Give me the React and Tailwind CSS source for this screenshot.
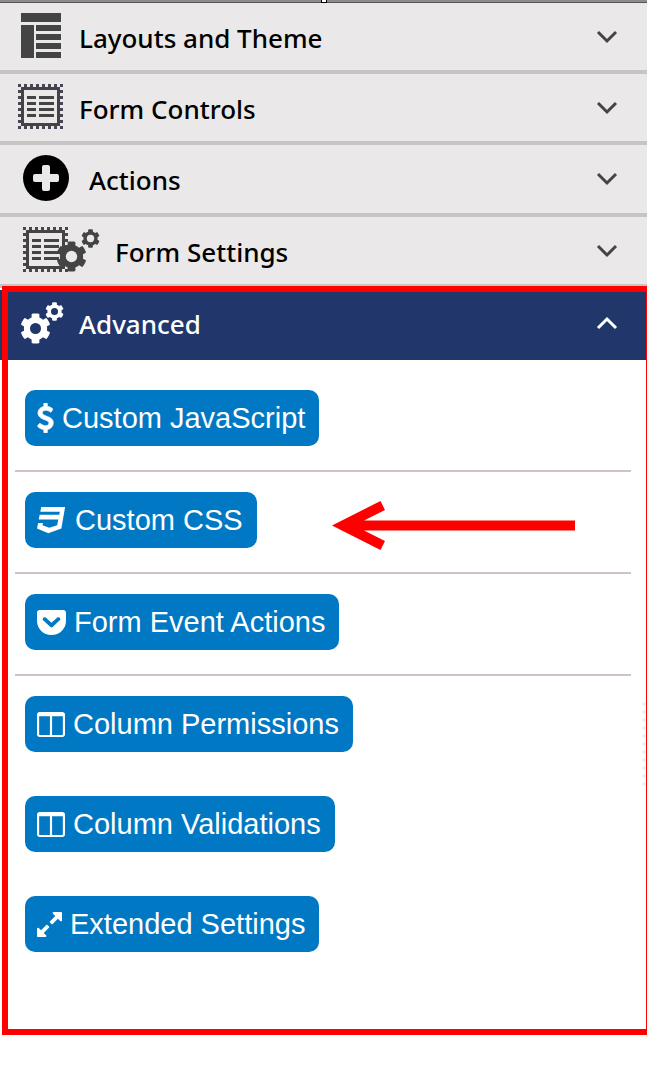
import { FaCog, FaCss3, FaGetPocket } from "react-icons/fa";

function LayoutIcon() {
  return (
    <svg className="ml-[21px] mr-[18px] h-[45px] w-10 shrink-0" viewBox="0 0 40 45" fill="#444444" shapeRendering="crispEdges">
      <path d="M0 0h40v9H0zM0 12h13v33H0zM15 12h25v6H15zM15 21h25v6H15zM15 30h25v6H15zM15 39h25v6H15z" />
    </svg>
  );
}

function FormShape() {
  return (
    <g shapeRendering="crispEdges">
      <path fill="none" stroke="#4b4455" strokeWidth="3" strokeDasharray="3 3" d="M0 1.5h45M0 43.5h45M1.5 0v45M43.5 0v45" />
      <path fill="none" stroke="#444444" strokeWidth="3" d="M4.5 4.5h36v36h-36z" />
      <path fill="#444444" d="M9 12h9v3H9zM21 12h15v3H21zM9 18h9v3H9zM21 18h15v3H21zM9 24h9v3H9zM21 24h15v3H21zM9 30h9v3H9zM21 30h15v3H21z" />
    </g>
  );
}

function FormIcon() {
  return (
    <svg className="ml-[18px] mr-4 h-[45px] w-[45px] shrink-0" viewBox="0 0 45 45">
      <FormShape />
    </svg>
  );
}

function PlusIcon() {
  return (
    <svg className="ml-[23px] mr-5 h-[46px] w-[46px] shrink-0" viewBox="0 0 46 46">
      <circle cx="23" cy="23" r="23" fill="#000" />
      <path fill="#eae8e8" d="M21 10h4a2 2 0 0 1 2 2v7h7a2 2 0 0 1 2 2v4a2 2 0 0 1-2 2h-7v7a2 2 0 0 1-2 2h-4a2 2 0 0 1-2-2v-7h-7a2 2 0 0 1-2-2v-4a2 2 0 0 1 2-2h7v-7a2 2 0 0 1 2-2z" />
    </svg>
  );
}

function FormSettingsIcon() {
  return (
    <svg className="ml-[23px] mr-[15px] h-[45px] w-[77px] shrink-0" viewBox="0 0 77 45">
      <FormShape />
      <FaCog x="33" y="14" size={31} color="#444444" />
      <FaCog x="58" y="2" size={19} color="#444444" />
      <circle cx="48.5" cy="29.5" r="5.700" fill="#eae8e8" />
      <circle cx="67.5" cy="11.5" r="3.700" fill="#eae8e8" />
    </svg>
  );
}

function CogsIcon() {
  return (
    <svg className="ml-5 mr-[15px] h-[42px] w-11 shrink-0" viewBox="0 0 44 42">
      <FaCog x="0" y="11" size={31} color="#fff" />
      <FaCog x="25" y="0" size={19} color="#fff" />
      <circle cx="15.5" cy="26.5" r="5.500" fill="#21376c" />
      <circle cx="34.5" cy="9.5" r="3.500" fill="#21376c" />
    </svg>
  );
}

function Chevron({ open }) {
  return (
    <svg className="mr-[29px] h-[14px] w-[22px] shrink-0" viewBox="0 0 22 14" fill="none" stroke="currentColor" strokeWidth="3">
      <path d={open ? "M2 12l9-9 9 9" : "M2 2l9 9 9-9"} />
    </svg>
  );
}

function DollarIcon() {
  return (
    <svg className="h-[30px] w-[17px]" viewBox="400 0 1000 1792" fill="currentColor" stroke="currentColor" strokeWidth="50">
      <path d="M1362 1185q0 153-99.5 263.5t-258.5 136.5v175q0 14-9 23t-23 9h-135q-13 0-22.5-9.5t-9.5-22.5v-175q-66-9-127.5-31t-101.5-44.5-74-48-46.5-37.5-17.5-18q-17-21-2-41l103-135q7-10 23-12 15-2 24 9l2 2q113 99 243 125 37 8 74 8 81 0 142.5-43t61.5-122q0-28-15-53t-33.5-42-58.5-37.5-66-32-80-32.5q-39-16-61.5-25t-61.5-26.5-62.5-31-56.5-35.5-53.5-42.5-43.5-49-35.5-58-21-66.5-8.5-78q0-138 98-242t255-134v-180q0-13 9.5-22.5t22.5-9.5h135q14 0 23 9t9 23v176q57 6 110.5 23t87 33.5 63.5 37.5 39 29 15 14q17 18 5 38l-81 146q-8 15-23 16-14 3-27-7-3-3-14.5-12t-39-26.5-58.5-32-74.5-26-85.5-11.5q-95 0-155 43t-60 111q0 26 8.5 48t29.5 41.5 39.5 33 56 31 60.5 27 70 27.5q53 20 81 31.5t76 35 75.5 42.5 62 50 53 63.5 31.5 76.5 13 94z" />
    </svg>
  );
}

function ColumnsIcon() {
  return (
    <svg className="h-[25px] w-7" viewBox="0 128 1664 1536" preserveAspectRatio="none" fill="currentColor">
      <path d="M160 1536h608v-1152h-640v1120q0 13 9.5 22.5t22.5 9.5zm1376-32v-1120h-640v1152h608q13 0 22.5-9.5t9.5-22.5zm128-1216v1216q0 66-47 113t-113 47h-1344q-66 0-113-47t-47-113v-1216q0-66 47-113t113-47h1344q66 0 113 47t47 113z" />
    </svg>
  );
}

function ExpandIcon() {
  return (
    <svg className="h-[25px] w-[25px]" viewBox="128 128 1536 1536" fill="currentColor">
      <path d="M883 1056q0 13-10 23l-332 332 144 144q19 19 19 45t-19 45-45 19h-448q-26 0-45-19t-19-45v-448q0-26 19-45t45-19 45 19l144 144 332-332q10-10 23-10t23 10l114 114q10 10 10 23zm781-864v448q0 26-19 45t-45 19-45-19l-144-144-332 332q-10 10-23 10t-23-10l-114-114q-10-10-10-23t10-23l332-332-144-144q-19-19-19-45t19-45 45-19h448q26 0 45 19t19 45z" />
    </svg>
  );
}

function Arrow() {
  return (
    <svg className="absolute left-[317px] top-[29px] h-[49px] w-[243px]" viewBox="0 0 243 49" fill="#ff0000">
      <path d="M0 24.5L48.5 0l4.5 9-21 10.500H243v10H32l21 10.500-4.500 9z" />
    </svg>
  );
}

const sections = [
  { title: "Layouts and Theme", icon: <LayoutIcon /> },
  { title: "Form Controls", icon: <FormIcon /> },
  { title: "Actions", icon: <PlusIcon /> },
  { title: "Form Settings", icon: <FormSettingsIcon /> },
];

const actions = [
  { label: "Custom JavaScript", icon: <DollarIcon />, divider: true },
  { label: "Custom CSS", icon: <FaCss3 className="h-[30px] w-[30px]" />, divider: true, arrow: true },
  { label: "Form Event Actions", icon: <FaGetPocket className="h-8 w-[29px]" preserveAspectRatio="none" />, divider: true },
  { label: "Column Permissions", icon: <ColumnsIcon /> },
  { label: "Column Validations", icon: <ColumnsIcon /> },
  { label: "Extended Settings", icon: <ExpandIcon /> },
];

function App() {
  return (
    <div className="min-h-screen overflow-hidden bg-white">
      <div className="flex h-[3px] justify-center border-b border-[#555555] bg-[#8c8c8c]">
        <span className="h-[3px] w-[6px] border-x border-b border-black bg-white" />
      </div>

      <nav className="font-['Noto_Sans',sans-serif] text-[26px] leading-9 font-medium">
        {sections.map((s) => (
          <button key={s.title} type="button" className="flex w-full items-center border-b-4 border-[#c5c5c5] bg-[#eae8e8] pt-[10px] pb-3 text-left text-black">
            {s.icon}
            <span className="pt-1">{s.title}</span>
            <span className="ml-auto pt-0.5 text-[#444444]"><Chevron /></span>
          </button>
        ))}
      </nav>

      <section className="relative mt-[2px] pb-[59px]">
        <button type="button" aria-expanded="true" className="flex w-full items-center bg-[#21376c] pt-3 pb-4 text-left font-['Noto_Sans',sans-serif] text-[26px] leading-9 font-medium text-white">
          <CogsIcon />
          <span className="pt-0.5">Advanced</span>
          <span className="ml-auto"><Chevron open /></span>
        </button>

        <ul className="ml-[15px] mr-4 pt-[10px]">
          {actions.map((a) => (
            <li key={a.label} className={a.divider ? "relative border-b-2 border-[#cdc3c3] px-[10px] pb-6 pt-5" : "px-[10px] pb-6 pt-5"}>
              <button type="button" className="flex h-14 items-center gap-2 rounded-[10px] bg-[#0078c3] pl-3 pr-[14px] font-['Liberation_Sans',Arial,sans-serif] text-[29px] text-white">
                {a.icon}
                <span className="pt-0.5">{a.label}</span>
              </button>
              {a.arrow && <Arrow />}
            </li>
          ))}
        </ul>

        <div className="absolute right-px top-[412px] h-[84px] border-r-4 border-dotted border-[#f1f1f3]" />
        <div className="pointer-events-none absolute -right-[5px] -top-1 bottom-0 left-0.5 border-[6px] border-[#ff0000]" />
      </section>
    </div>
  );
}

export default App;
